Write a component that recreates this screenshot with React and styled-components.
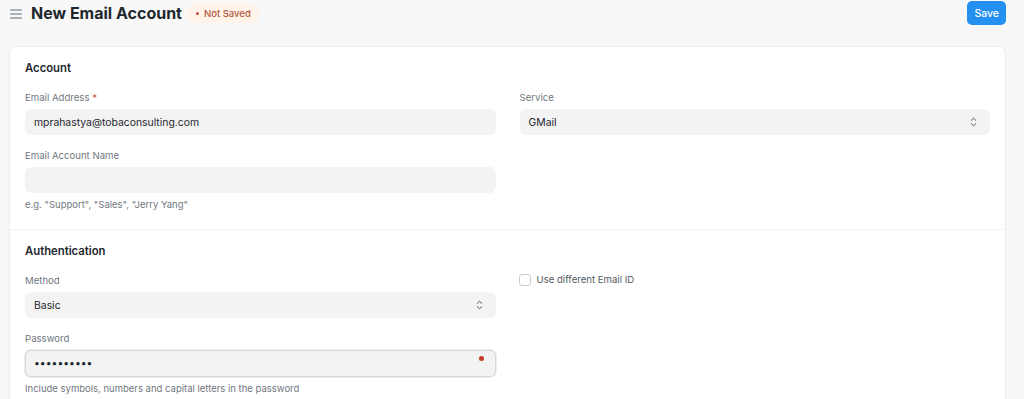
import React from "react";
import styled, { createGlobalStyle } from "styled-components";

const Global = createGlobalStyle`
  * { box-sizing: border-box; }
  html, body { margin: 0; padding: 0; background: #f8f8f8; }
  body { font-family: Inter, "Noto Sans", sans-serif; color: #1f272e; -webkit-font-smoothing: antialiased; }
`;

const Page = styled.div`
  width: 1024px;
  height: 399px;
  overflow: hidden;
  background: #f8f8f8;
`;

const Header = styled.header`
  display: flex;
  align-items: center;
  height: 26px;
  padding: 0 18px 0 10px;
`;

const Burger = styled.button`
  width: 12px;
  height: 10px;
  padding: 0;
  border: 0;
  background: none;
  display: flex;
  flex-direction: column;
  justify-content: space-between;
  margin-right: 9px;
  margin-top: 1px;
  span { display: block; height: 2px; border-radius: 1px; background: #a9b0b7; }
`;

const Title = styled.h1`
  margin: 0;
  font-size: 16px;
  font-weight: 700;
  color: #1f272e;
  line-height: 26px;
`;

const Indicator = styled.span`
  display: inline-flex;
  align-items: center;
  gap: 5px;
  margin-left: 5px;
  height: 19px;
  padding: 0 8px 0 9px;
  border-radius: 8px;
  background: #fff3ea;
  color: #b3573b;
  font-size: 9.5px;
  font-weight: 500;
  &::before {
    content: "";
    width: 3px;
    height: 3px;
    border-radius: 50%;
    background: #c9543a;
  }
`;

const Spacer = styled.div` flex: 1; `;

const SaveButton = styled.button`
  height: 24px;
  padding: 0 7px;
  border: 0;
  border-radius: 5px;
  background: #2490ef;
  color: #fff;
  font-family: inherit;
  font-size: 10.5px;
  font-weight: 500;
`;

const Card = styled.main`
  margin: 20px 18px 0 9px;
  background: #fff;
  border: 1px solid #ececec;
  border-radius: 8px;
`;

const Section = styled.section`
  padding: 9px 15px ${(p) => p.$bottom}px;
  & + & { border-top: 1px solid #f2f2f2; }
`;

const SectionHead = styled.h2`
  margin: 0 0 11px;
  padding-top: 2px;
  font-size: 11.3px;
  line-height: 20px;
  font-weight: 600;
  color: #1f272e;
`;

const Columns = styled.div`
  display: grid;
  grid-template-columns: 1fr 1fr;
  column-gap: 24px;
  align-items: start;
`;

const Column = styled.div`
  display: flex;
  flex-direction: column;
  gap: 12px;
`;

const Field = styled.div`
  display: flex;
  flex-direction: column;
`;

const Label = styled.label`
  padding-top: 1px;
  margin-bottom: 3px;
  font-size: 9.6px;
  line-height: 16px;
  color: #6f7780;
  span { color: #c9543a; }
`;

const InputWrap = styled.div`
  position: relative;
`;

const Input = styled.input`
  width: 100%;
  height: ${(p) => (p.$focused ? 27 : 26)}px;
  border: ${(p) => (p.$focused ? "1px solid #d5d9dd" : "1px solid transparent")};
  border-radius: 6px;
  background: #f3f3f3;
  padding: 0 8px;
  font-family: Inter, "Noto Sans", sans-serif;
  font-size: 10.4px;
  color: #1f272e;
  outline: none;
  box-shadow: ${(p) => (p.$focused ? "0 0 0 1px #eceef0" : "none")};
`;

const Select = styled.div`
  position: relative;
  height: 26px;
  border-radius: 6px;
  background: #f3f3f3;
  padding: 0 9px;
  display: flex;
  align-items: center;
  font-size: 10.4px;
  color: #1f272e;
  svg { position: absolute; right: 13px; top: 8px; }
`;

const RequiredDot = styled.span`
  position: absolute;
  right: 12px;
  top: 6px;
  width: 5px;
  height: 5px;
  border-radius: 50%;
  background: #c4382b;
`;

const Help = styled.div`
  margin-top: 5px;
  font-size: 9.5px;
  line-height: 14px;
  color: #6f7780;
`;

const CheckRow = styled.label`
  display: flex;
  align-items: center;
  gap: 6px;
  margin-left: -1px;
  font-size: 9.6px;
  line-height: 16px;
  color: #505a62;
`;

const Box = styled.span`
  width: 12px;
  height: 12px;
  border: 1px solid #c8cdd2;
  border-radius: 3px;
  background: #fff;
`;

const Arrows = () => (
  <svg width="7" height="10" viewBox="0 0 7 10" fill="none" stroke="#4c5a67" strokeWidth="1" strokeLinecap="round" strokeLinejoin="round">
    <path d="M1.2 3.4 L3.5 1.2 L5.8 3.4" />
    <path d="M1.2 6.6 L3.5 8.8 L5.8 6.6" />
  </svg>
);

export default function App() {
  return (
    <Page>
      <Global />
      <Header>
        <Burger aria-label="menu"><span /><span /><span /></Burger>
        <Title>New Email Account</Title>
        <Indicator>Not Saved</Indicator>
        <Spacer />
        <SaveButton>Save</SaveButton>
      </Header>
      <Card>
        <Section $bottom={17}>
          <SectionHead>Account</SectionHead>
          <Columns>
            <Column>
              <Field>
                <Label>Email Address <span>*</span></Label>
                <Input readOnly value="mprahastya@tobaconsulting.com" />
              </Field>
              <Field>
                <Label>Email Account Name</Label>
                <Input readOnly value="" />
                <Help>e.g. "Support", "Sales", "Jerry Yang"</Help>
              </Field>
            </Column>
            <Column>
              <Field>
                <Label>Service</Label>
                <Select>GMail<Arrows /></Select>
              </Field>
            </Column>
          </Columns>
        </Section>
        <Section $bottom={20}>
          <SectionHead>Authentication</SectionHead>
          <Columns>
            <Column>
              <Field>
                <Label>Method</Label>
                <Select>Basic<Arrows /></Select>
              </Field>
              <Field>
                <Label>Password</Label>
                <InputWrap>
                  <Input $focused type="password" readOnly value="abcdefghij" />
                  <RequiredDot />
                </InputWrap>
                <Help>Include symbols, numbers and capital letters in the password</Help>
              </Field>
            </Column>
            <Column>
              <CheckRow><Box />Use different Email ID</CheckRow>
            </Column>
          </Columns>
        </Section>
      </Card>
    </Page>
  );
}
